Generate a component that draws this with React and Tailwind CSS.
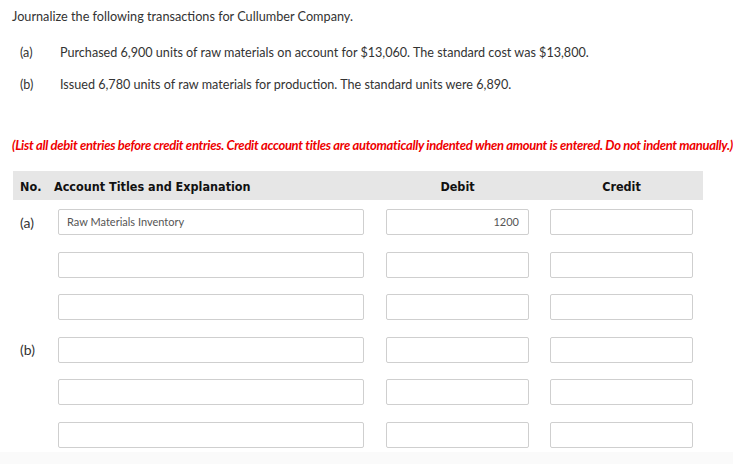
import React from "react";

const Row = ({ label, account = "", debit = "", credit = "" }) => (
  <div className="flex items-center h-[26px]">
    <div className="w-[45px] pl-[7px] text-[14px] text-[#333]">{label}</div>
    <div className="w-[306px] h-[26px] border border-[#cfcfcf] rounded-[2px] bg-white flex items-center px-[8px] text-[11px] text-[#555]">
      {account}
    </div>
    <div className="w-[22px]" />
    <div className="w-[143px] h-[26px] border border-[#cfcfcf] rounded-[2px] bg-white flex items-center justify-end px-[9px] text-[11px] text-[#555]">
      {debit}
    </div>
    <div className="w-[21px]" />
    <div className="w-[143px] h-[26px] border border-[#cfcfcf] rounded-[2px] bg-white flex items-center justify-end px-[9px] text-[11px] text-[#555]">
      {credit}
    </div>
  </div>
);

export default function App() {
  return (
    <div
      className="w-[733px] h-[464px] overflow-hidden bg-white relative"
      style={{ fontFamily: "Lato, 'Open Sans', sans-serif" }}
    >
      <div className="px-[12px] pt-[7px]">
        <div className="text-[12.7px] text-[#333] leading-[18px]">
          Journalize the following transactions for Cullumber Company.
        </div>
        <div className="mt-[19px] flex flex-col gap-[14px] text-[12.6px] text-[#333] leading-[18px]">
          <div className="flex">
            <span className="w-[48px] pl-[8px]">(a)</span>
            <span>Purchased 6,900 units of raw materials on account for $13,060. The standard cost was $13,800.</span>
          </div>
          <div className="flex">
            <span className="w-[48px] pl-[8px]">(b)</span>
            <span>Issued 6,780 units of raw materials for production. The standard units were 6,890.</span>
          </div>
        </div>
        <div className="mt-[42px] text-[13px] leading-[18px] font-bold italic text-[#ee0000] tracking-[-0.3px] whitespace-nowrap">
          (List all debit entries before credit entries. Credit account titles are automatically indented when amount is entered. Do not indent manually.)
        </div>
        <div
          className="mt-[17px] ml-[1px] w-[690px] h-[29px] pt-[3px] bg-[#e6e6e6] flex items-center text-[12.5px] font-bold text-[#111]"
          style={{ fontFamily: "'DejaVu Sans Condensed', 'DejaVu Sans', Verdana, sans-serif" }}
        >
          <div className="w-[41px] pl-[7px]">No.</div>
          <div className="w-[332px]">Account Titles and Explanation</div>
          <div className="w-[143px] text-center">Debit</div>
          <div className="w-[21px]" />
          <div className="w-[143px] text-center">Credit</div>
        </div>
        <div className="mt-[9px] ml-[1px] flex flex-col gap-[16.6px]">
          <Row label="(a)" account="Raw Materials Inventory" debit="1200" />
          <Row />
          <Row />
          <Row label="(b)" />
          <Row />
          <Row />
        </div>
      </div>
      <div className="absolute left-0 right-0 bottom-0 h-[12px] bg-[#fafafa]" />
    </div>
  );
}
